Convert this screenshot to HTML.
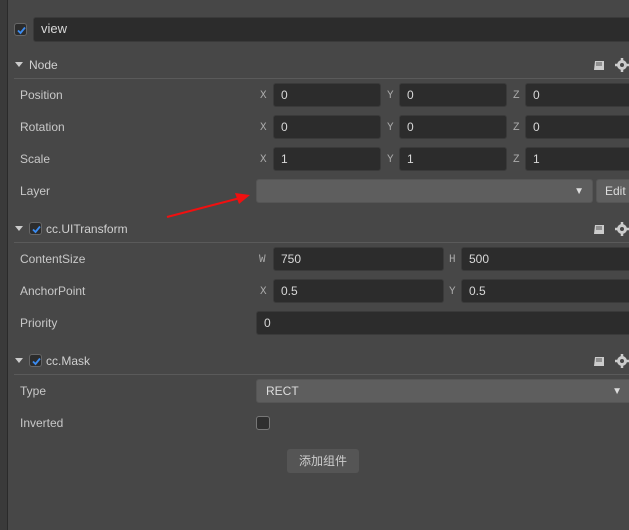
<!DOCTYPE html>
<html><head><meta charset="utf-8"><style>
*{margin:0;padding:0;box-sizing:border-box}
body{width:629px;height:530px;overflow:hidden;background:#474747;font-family:"Liberation Sans","Noto Sans CJK SC",sans-serif;font-size:12px;color:#cfcfcf;position:relative}
.a{position:absolute}
.strip{left:0;top:0;width:8px;height:530px;background:#3a3a3a;border-right:1px solid #2a2a2a}
.in{position:absolute;background:#2c2c2c;border:1px solid #3a3a3a;border-radius:3px;height:24px;line-height:22px;padding-left:7px;color:#d8d8d8}
.lb{position:absolute;left:20px;color:#c8c8c8;top:0}
.ax{position:absolute;font-family:"Liberation Mono",monospace;font-size:11px;color:#aaa}
.sel{position:absolute;background:#5e5e5e;border:1px solid #555;border-radius:3px;height:24px;line-height:22px;padding-left:9px;color:#ddd}
.hd{position:absolute;left:15px;color:#d0d0d0}
.tri{display:inline-block;width:0;height:0;border-left:4px solid transparent;border-right:4px solid transparent;border-top:5px solid #ccc;margin-right:6px;vertical-align:2px}
.cb{display:inline-block;width:13px;height:13px;border:1px solid #666;border-radius:3px;background:#2c2c2c;vertical-align:-2px;margin-right:4px;position:relative}
.cb svg{position:absolute;left:1px;top:1px}
.line{position:absolute;left:14px;right:0;height:1px;background:#5a5a5a}
</style></head><body>
<div class="a strip"></div>
<div class="a" style="left:14px;top:23px"><span class="cb"><svg width="11" height="11" viewBox="0 0 11 11"><path d="M2 5.5L4.5 8L9 2.5" stroke="#3b8cf2" stroke-width="1.8" fill="none"/></svg></span></div>
<div class="in" style="left:33px;top:17px;width:600px;height:25px;font-size:13px">view</div>

<div class="hd" style="top:58px"><span class="tri"></span>Node</div>
<div class="line" style="top:78px"></div>

<div class="lb" style="top:88px">Position</div>
<div class="lb" style="top:120px">Rotation</div>
<div class="lb" style="top:152px">Scale</div>
<div class="lb" style="top:184px">Layer</div>

<div class="ax" style="left:260px;top:90px">X</div><div class="in" style="left:273px;top:83px;width:108px">0</div>
<div class="ax" style="left:387px;top:90px">Y</div><div class="in" style="left:399px;top:83px;width:108px">0</div>
<div class="ax" style="left:513px;top:90px">Z</div><div class="in" style="left:525px;top:83px;width:110px">0</div>
<div class="ax" style="left:260px;top:122px">X</div><div class="in" style="left:273px;top:115px;width:108px">0</div>
<div class="ax" style="left:387px;top:122px">Y</div><div class="in" style="left:399px;top:115px;width:108px">0</div>
<div class="ax" style="left:513px;top:122px">Z</div><div class="in" style="left:525px;top:115px;width:110px">0</div>
<div class="ax" style="left:260px;top:154px">X</div><div class="in" style="left:273px;top:147px;width:108px">1</div>
<div class="ax" style="left:387px;top:154px">Y</div><div class="in" style="left:399px;top:147px;width:108px">1</div>
<div class="ax" style="left:513px;top:154px">Z</div><div class="in" style="left:525px;top:147px;width:110px">1</div>

<div class="sel" style="left:256px;top:179px;width:337px"><span style="position:absolute;right:8px;top:1px;font-size:10px">▼</span></div>
<div class="sel" style="left:596px;top:179px;width:40px;padding-left:8px">Edit</div>

<svg class="a" style="left:160px;top:188px" width="100" height="36"><path d="M7 29L80 10" stroke="#f01010" stroke-width="2"/><path d="M90 7L75 5L79 16Z" fill="#f01010"/></svg>

<div class="hd" style="top:222px"><span class="tri"></span><span class="cb"><svg width="11" height="11" viewBox="0 0 11 11"><path d="M2 5.5L4.5 8L9 2.5" stroke="#3b8cf2" stroke-width="1.8" fill="none"/></svg></span>cc.UITransform</div>
<div class="line" style="top:242px"></div>

<div class="lb" style="top:252px">ContentSize</div>
<div class="lb" style="top:284px">AnchorPoint</div>
<div class="lb" style="top:316px">Priority</div>
<div class="ax" style="left:259px;top:254px">W</div><div class="in" style="left:273px;top:247px;width:171px">750</div>
<div class="ax" style="left:449px;top:254px">H</div><div class="in" style="left:461px;top:247px;width:172px">500</div>
<div class="ax" style="left:260px;top:286px">X</div><div class="in" style="left:273px;top:279px;width:171px">0.5</div>
<div class="ax" style="left:449px;top:286px">Y</div><div class="in" style="left:461px;top:279px;width:172px">0.5</div>
<div class="in" style="left:256px;top:311px;width:380px">0</div>

<div class="hd" style="top:354px"><span class="tri"></span><span class="cb"><svg width="11" height="11" viewBox="0 0 11 11"><path d="M2 5.5L4.5 8L9 2.5" stroke="#3b8cf2" stroke-width="1.8" fill="none"/></svg></span>cc.Mask</div>
<div class="line" style="top:374px"></div>
<div class="lb" style="top:384px">Type</div>
<div class="lb" style="top:416px">Inverted</div>
<div class="sel" style="left:256px;top:379px;width:380px">RECT<span style="position:absolute;right:13px;top:1px;font-size:10px">▼</span></div>
<div class="a" style="left:256px;top:416px;width:14px;height:14px;border:1px solid #777;border-radius:3px;background:#2f2f2f"></div>
<div class="a" style="left:287px;top:449px;width:72px;height:24px;background:#555;border-radius:3px;text-align:center;line-height:24px;color:#ccc">添加组件</div>

<svg class="a" style="left:592px;top:58px" width="37" height="14"><path d="M3 3h9v9H2z" fill="#ccc"/><path d="M4 5h6M4 7h6" stroke="#555"/><circle cx="30" cy="7" r="5" fill="#ccc"/><circle cx="30" cy="7" r="2" fill="#474747"/><path d="M30 0v3M30 11v3M23 7h3M34 7h3" stroke="#ccc" stroke-width="2.5"/></svg>
<svg class="a" style="left:592px;top:222px" width="37" height="14"><path d="M3 3h9v9H2z" fill="#ccc"/><path d="M4 5h6M4 7h6" stroke="#555"/><circle cx="30" cy="7" r="5" fill="#ccc"/><circle cx="30" cy="7" r="2" fill="#474747"/><path d="M30 0v3M30 11v3M23 7h3M34 7h3" stroke="#ccc" stroke-width="2.5"/></svg>
<svg class="a" style="left:592px;top:354px" width="37" height="14"><path d="M3 3h9v9H2z" fill="#ccc"/><path d="M4 5h6M4 7h6" stroke="#555"/><circle cx="30" cy="7" r="5" fill="#ccc"/><circle cx="30" cy="7" r="2" fill="#474747"/><path d="M30 0v3M30 11v3M23 7h3M34 7h3" stroke="#ccc" stroke-width="2.5"/></svg>
</body></html>
